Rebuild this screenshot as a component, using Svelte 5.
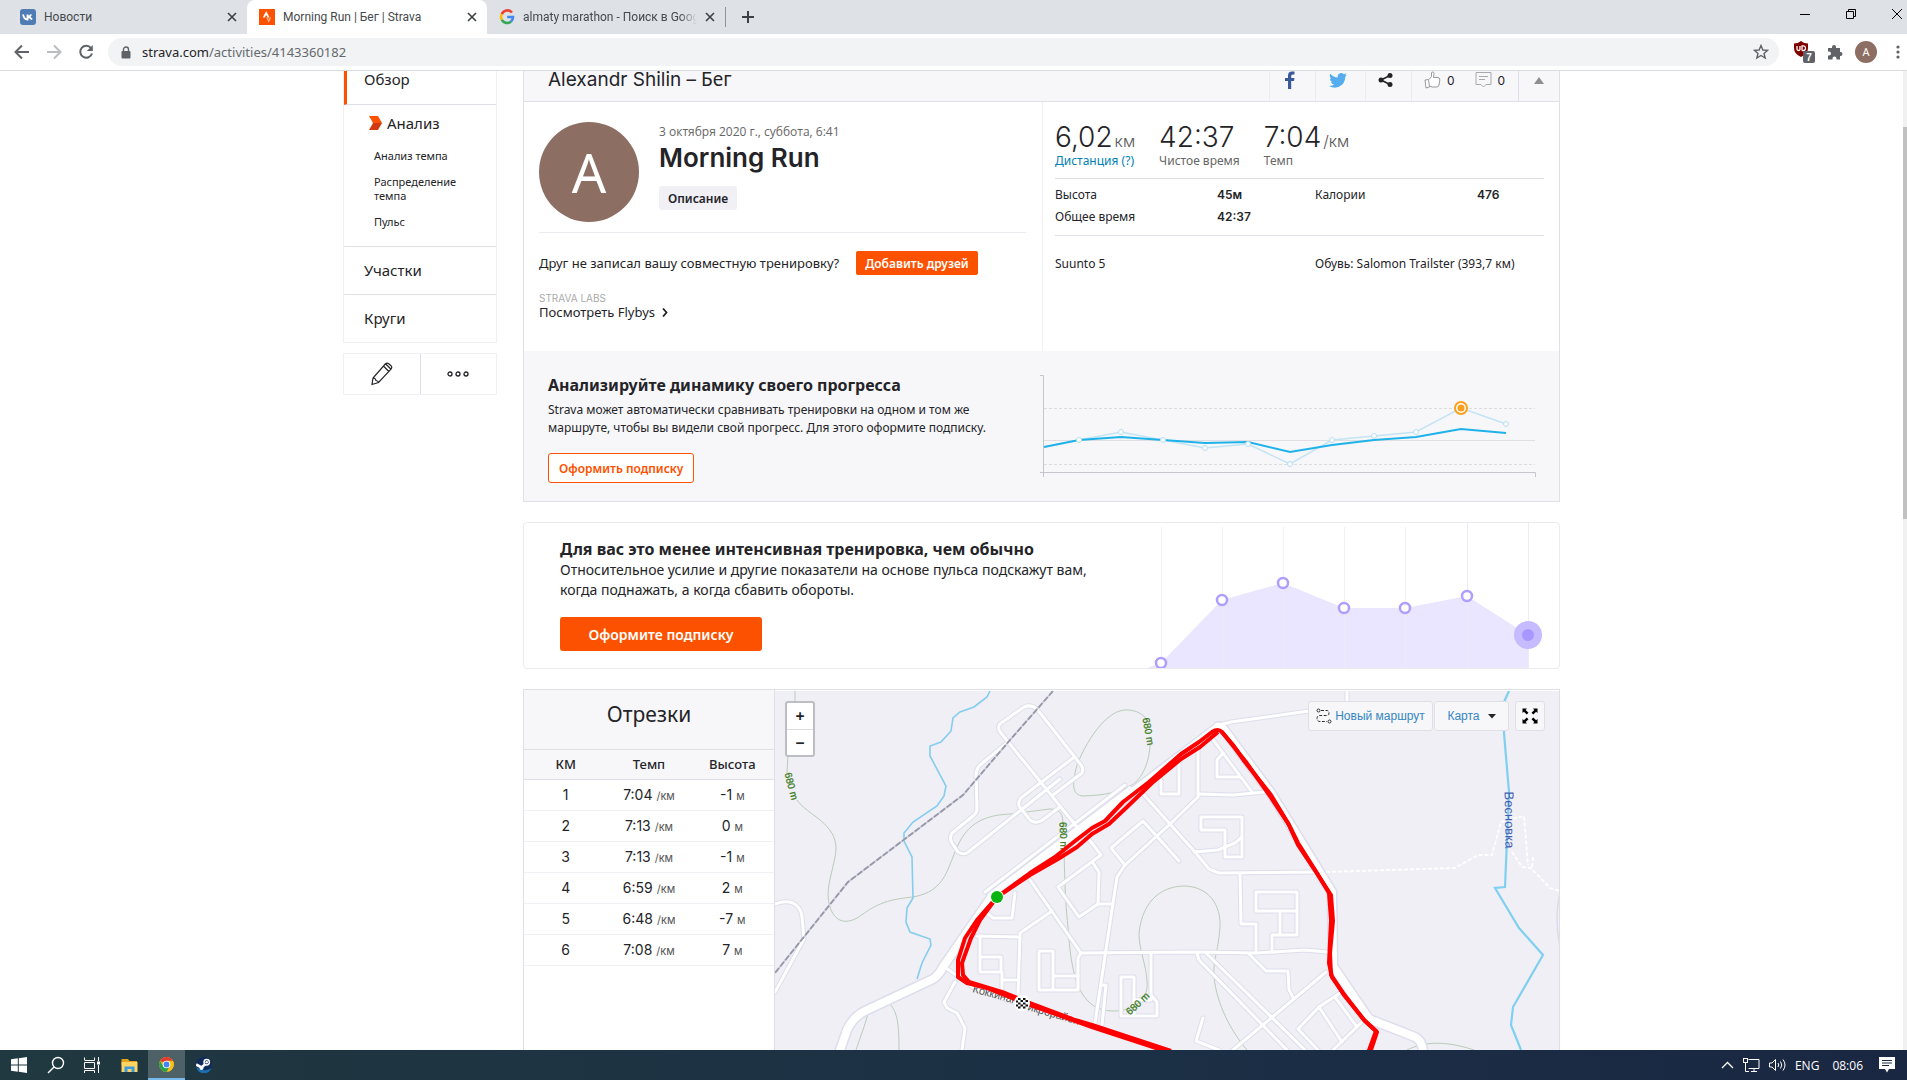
<script>
	const tabs = [
		{ titulo: 'Новости', icono: 'vk', activa: false },
		{ titulo: 'Morning Run | Бег | Strava', icono: 'strava', activa: true },
		{ titulo: 'almaty marathon - Поиск в Google', icono: 'google', activa: false }
	];

	const splits = [
		{ km: 1, pace: '7:04', elev: '-1' },
		{ km: 2, pace: '7:13', elev: '0' },
		{ km: 3, pace: '7:13', elev: '-1' },
		{ km: 4, pace: '6:59', elev: '2' },
		{ km: 5, pace: '6:48', elev: '-7' },
		{ km: 6, pace: '7:08', elev: '7' }
	];

	// Progress chart
	const runs = [
		[39, 67], [81, 59], [123, 67], [165, 75], [208, 71], [250, 91],
		[292, 67], [334, 63], [376, 59], [421, 35], [466, 51]
	];
	const trend = '4,74 39,67 81,64 123,67 165,70 208,69 250,79 292,72 334,67 376,64 421,56 466,60';

	// Relative effort chart
	const effort = [[14, 140], [75, 77], [136, 60], [197, 85], [258, 85], [320, 73], [381, 112]];

	// Map geometry
	const roads = [
		'M278 104L307 82Q309 78 306 74L262 18Q256 13 249 16L226 32Q221 36 226 42L302 136',
		'M232 52L205 74Q201 78 201 84L202 118Q202 122 198 125L177 142Q174 147 177 152L183 161Q188 164 192 162L285 88',
		'M298 67L247 106Q243 109 244 115L255 129Q260 133 266 130L285 116',
		'M350 94L210 201', 'M355 97L215 203',
		'M444 34L456 31L534 20L572 12V0',
		'M369 104L420 161L434 178L444 182L541 181',
		'M423 56V106L394 134L350 174L342 186L338 212L320 332',
		'M350 174L336 157L368 130L404 170',
		'M386 89V103H404V72',
		'M436 46L477 101', 'M424 103L458 104L489 101',
		'M448 62L442 69V86H465',
		'M450 166V139H426V126H467V166Z', 'M419 161L443 159L460 152L467 146',
		'M465 183L466 233H481V261',
		'M481 220V201H522V244H497V261', 'M481 220H522', 'M505 220V244',
		'M306 262L420 261L481 262L530 259L552 261',
		'M255 189L306 262L303 267V299H264V260H278V299', 'M278 285H303',
		'M277 220L245 242L243 306',
		'M312 146L326 164L283 196L304 226L323 213H338', 'M318 172L324 181L323 213',
		'M376 262V309H359', 'M359 324V286H346V325H382V311L376 304',
		'M326 294H331L327 334',
		'M422 262L424 269L512 359', 'M431 262L530 359',
		'M551 281L458 359',
		'M474 263L491 280H513L514 299L518 306',
		'M565 302L544 316L523 338L543 359', 'M544 316L567 351', 'M560 306L582 336', 'M589 329L558 359',
		'M428 327L421 350L444 359',
		'M202 245L243 246', 'M205 245V281H226V266H205', 'M227 281V297', 'M227 289H242',
		'M212 222L218 227H237L240 202',
		'M171 277L202 299L247 314', 'M180 291L169 311L172 317L182 322L190 337L187 359',
		'M0 213Q10 209 18 212Q26 216 27 226L29 248L0 301'
	];
	const mainRoads = [
		'M443 36L317 132L217 205L168 276Q164 284 158 288L90 320Q78 326 72 339L64 362',
		'M441 36Q446 34 450 40L496 102L544 180L557 201L558 275L594 328L640 346Q648 350 648 362'
	];
	const contours = [
		'M20 0V14', 'M13 64L12 82',
		'M22 109C32 124 62 132 61 159C60 172 53 190 53 204C54 226 66 236 82 227C96 218 104 209 138 206C172 200 172 176 184 152C196 128 216 124 235 123L275 118C286 118 288 124 288 134C290 176 289 200 293 236C296 280 302 320 338 320C362 320 374 306 372 290C371 272 364 260 364 242C368 206 390 195 410 195C434 196 446 214 445 236C443 262 438 268 439 286C442 314 456 340 472 359',
		'M375 54C374 76 364 90 357 94C342 102 330 104 308 105C298 104 296 96 302 74C314 44 334 18 352 19C362 19 370 24 374 32',
		'M81 359C86 344 90 334 92 326C96 314 104 306 112 311C122 318 124 330 124 359',
		'M632 359C650 350 672 350 699 359'
	];

	const routeUp = 'M222 206L255 182L280 166L300 150L317 137L330 130L348 111L374 91L406 63L424 51L437 41Q443 37 447 41L458 54L470 71L496 104L513 132L523 152L542 182L554 202L556 229L554 272L557 286L568 302L589 329L601 340L593 362';
	const routeDown = 'M222 206L202 229L190 247L183 269V286L192 292L212 297L247 311L317 336L396 362';
	const routeLap = 'M443 41L425 56L406 68L377 92L352 116L334 133L317 143L302 156L283 168L255 184L222 206L205 229L196 247L187 272L188 284L194 291L230 302L255 312L300 329L317 334L396 360';
	const routeLapRight = 'M447 41L471 71L495 105L514 134L523 154L543 184L556 204L558 230L555 262L556 284L569 304L590 330L602 341L595 362';
</script>

<div class="screen">
	<header class="chrome">
		<div class="tab-strip">
			{#each tabs as tab}
				<div class="tab" class:active={tab.activa}>
					<svg class="favicon" viewBox="0 0 16 16" aria-hidden="true">
						{#if tab.icono === 'vk'}
							<rect width="16" height="16" rx="3" fill="#4f7db3" />
							<path d="M3 5.500C3.600 8.500 5 10.500 7.500 10.500V5.500M7.500 8C9.200 8 10.400 7 11.200 5.500M7.800 8C9.800 8 11 9 12 10.500" fill="none" stroke="#fff" stroke-width="1.800" />
						{:else if tab.icono === 'strava'}
							<rect width="16" height="16" fill="#fc5200" />
							<path d="M7.200 2L3.800 8.600H5.800L7.200 6L8.600 8.600H10.600Z" fill="#fff" />
							<path d="M8.600 8.600L9.700 10.800L10.600 8.600H12.200L9.700 13.800L7.200 8.600Z" fill="#fdb08c" />
						{:else}
							<path d="M13 3.500A6 6 0 0 0 2.800 5.200" fill="none" stroke="#ea4335" stroke-width="2.600" />
							<path d="M2.800 5.200A6 6 0 0 0 2.800 10.800" fill="none" stroke="#fbbc05" stroke-width="2.600" />
							<path d="M2.800 10.800A6 6 0 0 0 12 12.500" fill="none" stroke="#34a853" stroke-width="2.600" />
							<path d="M12 12.500A6 6 0 0 0 14 8H8.200" fill="none" stroke="#4285f4" stroke-width="2.600" />
						{/if}
					</svg>
					<span class="tab-title">{tab.titulo}</span>
					<button class="tab-close" aria-label="Закрыть">
						<svg width="10" height="10" viewBox="0 0 10 10"><path d="M1 1L9 9M9 1L1 9" stroke="#3c4043" stroke-width="1.600" /></svg>
					</button>
				</div>
			{/each}
			<button class="new-tab" aria-label="Новая вкладка">
				<svg width="14" height="14" viewBox="0 0 14 14"><path d="M7 1V13M1 7H13" stroke="#3c4043" stroke-width="2" /></svg>
			</button>
			<div class="window-buttons">
				<button aria-label="Свернуть"><svg width="12" height="12" viewBox="0 0 12 12"><path d="M1 6.500H11" stroke="#000" /></svg></button>
				<button aria-label="Окно"><svg width="12" height="12" viewBox="0 0 12 12"><path d="M1.500 3.500H8.500V10.500H1.500ZM3.500 3.500V1.500H10.500V8.500H8.500" fill="none" stroke="#000" /></svg></button>
				<button aria-label="Закрыть окно"><svg width="12" height="12" viewBox="0 0 12 12"><path d="M1 1L11 11M11 1L1 11" stroke="#000" /></svg></button>
			</div>
		</div>
		<div class="toolbar">
			<button class="nav" aria-label="Назад"><svg width="16" height="16" viewBox="0 0 16 16"><path d="M15 8H2M8 1.500L1.500 8L8 14.500" fill="none" stroke="#5f6368" stroke-width="2" /></svg></button>
			<button class="nav" aria-label="Вперёд"><svg width="16" height="16" viewBox="0 0 16 16"><path d="M1 8H14M8 1.500L14.500 8L8 14.500" fill="none" stroke="#bbbdc0" stroke-width="2" /></svg></button>
			<button class="nav" aria-label="Обновить"><svg width="16" height="16" viewBox="0 0 16 16"><path d="M13 4A6 6 0 1 0 14 9.500" fill="none" stroke="#5f6368" stroke-width="2" /><path d="M14.800 1V7H8.800Z" fill="#5f6368" /></svg></button>
			<div class="omnibox">
				<svg width="10" height="13" viewBox="0 0 10 13"><rect x="0.500" y="5" width="9" height="7.500" rx="1" fill="#5f6368" /><path d="M2.500 5V3.500A2.500 2.500 0 0 1 7.500 3.500V5" fill="none" stroke="#5f6368" stroke-width="1.400" /></svg>
				<span class="url">strava.com<span>/activities/4143360182</span></span>
				<svg width="16" height="16" viewBox="0 0 16 16"><path d="M8 1.500L9.900 6L14.600 6.300L11 9.400L12.200 14.100L8 11.500L3.800 14.100L5 9.400L1.400 6.300L6.100 6Z" fill="none" stroke="#5f6368" stroke-width="1.400" /></svg>
			</div>
			<div class="extensions">
				<svg width="22" height="24" viewBox="0 0 22 24"><path d="M8 1Q11 3.500 15 3.500V8Q15 14 8 17Q1 14 1 8V3.500Q5 3.500 8 1Z" fill="#800000" /><path d="M4 6V9Q4 10.500 5.500 10.500T7 9V6M9 10.500V6Q12.500 5.500 12.500 8.200T9 10.500" fill="none" stroke="#fff" stroke-width="1.300" /><rect x="10" y="11" width="12" height="12" rx="2" fill="#5f6368" /><text x="16" y="21" text-anchor="middle" class="badge">7</text></svg>
				<svg width="16" height="16" viewBox="0 0 16 16"><path d="M1 4H5V3A2 2 0 0 1 9 3V4H13V8H13.500A2 2 0 0 1 13.500 12H13V15.500H9.500V14.500A2 2 0 0 0 5.500 14.500V15.500H1V11.500H2A2 2 0 0 0 2 7.500H1Z" fill="#5f6368" /></svg>
				<span class="profile">A</span>
				<svg class="dots" width="4" height="16" viewBox="0 0 4 16" fill="#5f6368"><circle cx="2" cy="3" r="1.600" /><circle cx="2" cy="8" r="1.600" /><circle cx="2" cy="13" r="1.600" /></svg>
			</div>
		</div>
	</header>

	<div class="viewport">
		<div class="page">
			<nav class="sidebar">
				<ul class="menu">
					<li class="selected"><a href="#overview">Обзор</a></li>
					<li class="analysis">
						<a class="premium" href="#analysis">
							<svg width="13" height="14" viewBox="0 0 13 14"><path d="M0 0H9L13 7H4Z" fill="#fc5200" /><path d="M4 7H13L9 14H0Z" fill="#cf3a12" /></svg>
							Анализ
						</a>
						<a class="sub" href="#pace">Анализ темпа</a>
						<a class="sub" href="#zones">Распределение темпа</a>
						<a class="sub" href="#hr">Пульс</a>
					</li>
					<li><a href="#segments">Участки</a></li>
					<li><a href="#laps">Круги</a></li>
				</ul>
				<div class="tools">
					<button aria-label="Редактировать"><svg width="22" height="24" viewBox="0 0 22 24"><path d="M1 22.500L2 16L14.500 1.800Q16 0.500 18 2L20 3.700Q21.500 5.200 20 7.200L7.500 20.500ZM12.500 4L17.800 9.500M14.500 1.800L20 7.200M2 16Q4.500 16 5 18.500Q7.500 19 7.500 20.500" fill="none" stroke="#242428" stroke-width="1.200" /></svg></button>
					<button aria-label="Ещё"><svg width="22" height="6" viewBox="0 0 22 6" fill="none" stroke="#242428" stroke-width="1.300"><circle cx="3" cy="3" r="2" /><circle cx="11" cy="3" r="2" /><circle cx="19" cy="3" r="2" /></svg></button>
				</div>
			</nav>

			<main>
				<section class="activity">
					<div class="heading">
						<h2><span class="latin">Alexandr Shilin –</span> Бег</h2>
						<button class="share fb" aria-label="Facebook"><svg width="10" height="18" viewBox="0 0 10 18"><path d="M3 18V10H0V7H3V4.500Q3 0.500 7 0.500H9.500V3.500H7.800Q6.200 3.500 6.200 5V7H9.500L9 10H6.200V18Z" fill="#3b5998" /></svg></button>
						<button class="share tw" aria-label="Twitter"><svg width="18" height="15" viewBox="0 0 18 15"><path d="M0 13Q3.200 13.200 5.200 11.600Q2.600 11.300 1.900 9Q2.800 9.200 3.500 8.900Q0.800 8 0.700 5.200Q1.500 5.700 2.300 5.700Q-0.100 3.700 1.200 0.800Q4.300 4.400 8.800 4.600Q8.100 1.600 10.400 0.400Q12.900-0.700 14.800 1.200Q16.200 0.900 17.400 0.300Q16.900 1.700 15.900 2.400Q17 2.300 18 1.800Q17.400 2.900 16.200 3.900Q16.200 8.500 13 11.800Q7 17 0 13Z" fill="#55acee" /></svg></button>
						<button class="share sh" aria-label="Поделиться"><svg width="15" height="14" viewBox="0 0 15 14"><path d="M12 2.500L3 7L12 11.500" fill="none" stroke="#242428" stroke-width="1.600" /><circle cx="12" cy="2.600" r="2.500" fill="#242428" /><circle cx="3" cy="7" r="2.500" fill="#242428" /><circle cx="12" cy="11.400" r="2.500" fill="#242428" /></svg></button>
						<div class="social">
							<button aria-label="Kudos"><svg width="17" height="18" viewBox="0 0 17 18"><path d="M5 8.500L7.500 5.500V2Q7.500 1 8.800 1T10 2.500L9.500 6.500H14Q16 6.500 15.800 9L15 14Q14.600 16 12.500 16H8L5.500 15M1 9L4.500 8.500L5.500 16L2 17Z" fill="#fff" stroke="#98989e" /></svg>0</button>
							<button aria-label="Комментарии"><svg width="17" height="16" viewBox="0 0 17 16"><path d="M1 0.500H16V12.500H11L8.500 15L6 12.500H1ZM4 4.500H13M4 7.500H10" fill="none" stroke="#a8a8ae" /></svg>0</button>
						</div>
						<button class="collapse" aria-label="Свернуть"><svg width="10" height="7" viewBox="0 0 10 7"><path d="M5 0L10 7H0Z" fill="#8e8e93" /></svg></button>
					</div>

					<div class="columns">
						<div class="details">
							<div class="summary">
								<div class="avatar">A</div>
								<div class="title">
									<time>3 октября 2020 г., суббота, 6:41</time>
									<h1>Morning Run</h1>
									<button class="describe">Описание</button>
								</div>
							</div>
							<div class="friends">
								<span>Друг не записал вашу совместную тренировку?</span>
								<button>Добавить друзей</button>
							</div>
							<div class="labs">
								<small>STRAVA LABS</small>
								<a href="#flybys">
									Посмотреть Flybys
									<svg width="6" height="9" viewBox="0 0 6 9"><path d="M1 0.500L4.500 4.500L1 8.500" fill="none" stroke="#242428" stroke-width="1.800" /></svg>
								</a>
							</div>
						</div>

						<div class="stats">
							<ul class="big">
								<li><strong>6,02<small>км</small></strong><a href="#distance">Дистанция (?)</a></li>
								<li><strong>42:37</strong><span>Чистое время</span></li>
								<li><strong>7:04<small>/км</small></strong><span>Темп</span></li>
							</ul>
							<div class="more">
								<span>Высота</span><b>45м</b><span>Калории</span><b>476</b>
								<span>Общее время</span><b>42:37</b>
							</div>
							<div class="gear">
								<span>Suunto 5</span>
								<span>Обувь: Salomon Trailster (393,7 км)</span>
							</div>
						</div>
					</div>

					<div class="upsell">
						<div class="upsell-text">
							<h3>Анализируйте динамику своего прогресса</h3>
							<p>Strava может автоматически сравнивать тренировки на одном и том же маршруте, чтобы вы видели свой прогресс. Для этого оформите подписку.</p>
							<button>Оформить подписку</button>
						</div>
						<svg class="progress" viewBox="0 0 500 106">
							<path d="M0 2.500H3.500V104M0 99.500H495.500V104" fill="none" stroke="#c5c5cb" />
							<path d="M4 35.500H495M4 91.500H495" stroke="#dcdce0" stroke-dasharray="3 2" />
							<path d="M4 67.500H495" stroke="#dfdfe3" />
							<polyline points={'4,74 ' + runs.map((p) => p.join(',')).join(' ')} fill="none" stroke="#c3e4f3" stroke-width="1.500" />
							<polyline points={trend} fill="none" stroke="#1fb2e9" stroke-width="2" />
							{#each runs as [x, y], i}
								{#if i === 9}
									<circle cx={x} cy={y} r="6" fill="#fff" stroke="#fc9f1c" stroke-width="2" />
									<circle cx={x} cy={y} r="3.500" fill="#fc9f1c" />
								{:else}
									<circle cx={x} cy={y} r="2.500" fill="#fff" stroke="#b5dff1" />
								{/if}
							{/each}
						</svg>
					</div>
				</section>

				<section class="effort">
					<div class="effort-text">
						<h3>Для вас это менее интенсивная тренировка, чем обычно</h3>
						<p>Относительное усилие и другие показатели на основе пульса подскажут вам, когда поднажать, а когда сбавить обороты.</p>
						<button>Оформите подписку</button>
					</div>
					<svg viewBox="0 0 412 145">
						<polygon points={'0,145 ' + effort.map((p) => p.join(',')).join(' ') + ' 381,145'} fill="#eae6ff" />
						{#each effort as [x, y], i}
							<path d="M{x}.5 {i > 4 ? 0 : 4}V145" stroke="#ececf2" stroke-width={i > 4 ? 1 : 0.7} />
						{/each}
						{#each effort as [x, y], i}
							{#if i === 6}
								<circle cx={x} cy={y} r="14" fill="#c6bbff" />
								<circle cx={x} cy={y} r="6" fill="#a897ff" />
							{:else}
								<circle cx={x} cy={y} r="5" fill="#fff" stroke="#ad9eff" stroke-width="2.500" />
							{/if}
						{/each}
					</svg>
				</section>

				<section class="route">
					<div class="splits">
						<h2>Отрезки</h2>
						<table>
							<thead>
								<tr><th>КМ</th><th>Темп</th><th>Высота</th></tr>
							</thead>
							<tbody>
								{#each splits as s (s.km)}
									<tr>
										<td>{s.km}</td>
										<td>{s.pace} <small>/км</small></td>
										<td>{s.elev} <small>м</small></td>
									</tr>
								{/each}
							</tbody>
						</table>
					</div>

					<div class="map">
						<svg class="tiles" viewBox="0 0 785 359" preserveAspectRatio="xMinYMin slice">
							<g fill="none" stroke="#b9ccb8">
								{#each contours as d}<path {d} />{/each}
							</g>
							<path d="M215 0L212 6L199 16L185 21L178 27L176 40L166 51L155 55V65L171 95L169 105L162 115L138 131L129 142V150L137 166L138 207L132 217L131 231L135 241L155 248L156 254L147 272L142 288" fill="none" stroke="#84cdee" stroke-width="1.600" />
							<path d="M734 0L729 11V42L734 101L730 196L720 197L744 237L768 264L738 316L736 334L746 359" fill="none" stroke="#7fd0f0" stroke-width="2.200" />
							<path d="M785 201Q779 227 785 256" fill="none" stroke="#dcdce8" stroke-width="1.500" />
							<g fill="none" stroke="#dddeec" stroke-width="5" stroke-linejoin="round" stroke-linecap="round">
								{#each roads as d}<path {d} />{/each}
							</g>
							<g fill="none" stroke="#dddeec" stroke-width="11" stroke-linejoin="round">
								{#each mainRoads as d}<path {d} />{/each}
							</g>
							<g fill="none" stroke="#fff" stroke-width="3" stroke-linejoin="round" stroke-linecap="round">
								{#each roads as d}<path {d} />{/each}
							</g>
							<g fill="none" stroke="#fff" stroke-width="8" stroke-linejoin="round">
								{#each mainRoads as d}<path {d} />{/each}
							</g>
							<path d="M551 181L680 177L703 164H717L726 131L749 125L753 174M737 161L747 176L756 177L775 197L785 200M758 166L757 177" fill="none" stroke="#fff" stroke-width="1.800" stroke-dasharray="4 2" />
							<path d="M278 0L235 49L188 104L73 191L0 282" fill="none" stroke="#cfcfdc" stroke-width="1.800" />
							<path d="M278 0L235 49L188 104L73 191L0 282" fill="none" stroke="#9697a8" stroke-width="1.800" stroke-dasharray="6 2" />
							<g class="contour-label">
								<text transform="translate(13 96) rotate(75)">680 m</text>
								<text transform="translate(370 41) rotate(80)">680 m</text>
								<text transform="translate(285 145) rotate(88)">680 m</text>
								<text transform="translate(365 315) rotate(-43)">680 m</text>
							</g>
							<text class="river-label" transform="translate(730 129) rotate(89)">Весновка</text>
							<text class="street-label" transform="translate(197 301) rotate(15)">Коккинаки</text>
							<text class="street-label" transform="translate(252 319) rotate(16)">икрорайон</text>
							<g fill="none" stroke="#f00" stroke-width="4" stroke-linejoin="round">
								<path d={routeUp} />
								<path d={routeDown} />
								<path d={routeLap} />
								<path d={routeLapRight} />
							</g>
							<circle cx="222" cy="206" r="7" fill="#fff" />
							<circle cx="222" cy="206" r="6" fill="#0ab410" />
							<circle cx="247" cy="312" r="8" fill="#fff" />
							<path d="M243 307h2.500v2h-2.500zM248 307h2.500v2h-2.500zM245.500 309h2.500v2h-2.500zM250.500 309h2.500v2h-2.500zM241 309.500h2v2h-2zM243 311.500h2.500v2h-2.500zM248 311.500h2.500v2h-2.500zM245.500 313.500h2.500v2h-2.500zM250.500 313.500h2.500v2h-2.500zM241 313.500h2v2h-2zM243 315.500h2.500v2h-2.500zM248 315.500h2.500v2h-2.500z" fill="#111" />
						</svg>
						<div class="zoom">
							<button>+</button>
							<button>−</button>
						</div>
						<div class="map-buttons">
							<button class="new-route">
								<svg width="16" height="16" viewBox="0 0 16 16" fill="none" stroke="#333"><circle cx="2.500" cy="2.500" r="1.500" /><circle cx="13.500" cy="13.500" r="1.500" /><path d="M5 2.500H11Q13 2.500 13 5T11 7.500H4Q1 7.500 1 10.500T4 13.500H11" stroke-dasharray="3 1.500" /></svg>
								Новый маршрут
							</button>
							<button class="map-type">Карта <svg width="8" height="5" viewBox="0 0 8 5"><path d="M0 0H8L4 4.500Z" fill="#242428" /></svg></button>
							<button class="fullscreen" aria-label="На весь экран"><svg width="16" height="16" viewBox="0 0 16 16"><path d="M0.500 0.500H5L3.700 1.900L6.500 4.700L4.700 6.500L1.900 3.700L0.500 5ZM15.500 0.500V5L14.100 3.700L11.300 6.500L9.500 4.700L12.300 1.900L11 0.500ZM0.500 15.500V11L1.900 12.300L4.700 9.500L6.500 11.300L3.700 14.100L5 15.500ZM15.500 15.500H11L12.300 14.100L9.500 11.300L11.300 9.500L14.100 12.300L15.500 11Z" fill="#000" /></svg></button>
						</div>
					</div>
				</section>
			</main>
		</div>
		<div class="scrollbar"><div class="thumb"></div></div>
	</div>

	<footer class="taskbar">
		<button aria-label="Пуск"><svg width="16" height="16" viewBox="0 0 16 16"><path d="M0 2.300L6.800 1.300V7.500H0ZM7.800 1.200L16 0V7.500H7.800ZM0 8.500H6.800V14.700L0 13.700ZM7.800 8.500H16V16L7.800 14.800Z" fill="#fff" /></svg></button>
		<button aria-label="Поиск"><svg width="18" height="18" viewBox="0 0 18 18" fill="none" stroke="#fff" stroke-width="1.400"><circle cx="11" cy="7" r="5.500" /><path d="M7 11L1 17" /></svg></button>
		<button aria-label="Представление задач"><svg width="17" height="16" viewBox="0 0 17 16" fill="none" stroke="#fff"><path d="M0.500 0.500V3M0.500 3.500H10.500V0.500M0.500 5.500H10.500V11.500H0.500ZM0.500 16V13.500H10.500V16M14.500 0V4M14.500 8V16" /><rect x="13" y="4.500" width="3" height="3" fill="#fff" stroke="none" /></svg></button>
		<button aria-label="Проводник"><svg width="17" height="15" viewBox="0 0 17 15"><path d="M0.500 1H7L8.500 3H16V7H0.500Z" fill="#e2a31b" /><rect x="0.500" y="4" width="16" height="10" fill="#fcd462" /><path d="M3.500 14V8.500H13.500V14H10.500V11H6.500V14Z" fill="#3c9ade" /></svg></button>
		<button class="running" aria-label="Chrome"><svg width="15" height="15" viewBox="0 0 16 16"><circle cx="8" cy="8" r="8" fill="#fbc116" /><path d="M8 8L1.100 4A8 8 0 0 1 14.900 4H8Z" fill="#e33b2e" /><path d="M1.100 4A8 8 0 0 0 8 16L11.400 10L8 12L4.600 10Z" fill="#2aa14c" /><circle cx="8" cy="8" r="4" fill="#fff" /><circle cx="8" cy="8" r="3.100" fill="#4285f4" /></svg></button>
		<button aria-label="Steam"><svg width="16" height="16" viewBox="0 0 16 16"><circle cx="8" cy="8" r="8" fill="#0f2a5c" /><path d="M0.200 10A8 8 0 0 0 15.500 11Q8 16 0.200 10Z" fill="#1a6fb0" /><path d="M0.200 7.500L5.500 10.500L9.500 7" fill="none" stroke="#fff" stroke-width="2.600" /><circle cx="10.700" cy="5.300" r="2.700" fill="#0f2a5c" stroke="#fff" stroke-width="1.500" /><circle cx="10.700" cy="5.300" r="1.300" fill="#fff" /><circle cx="5.500" cy="11" r="2" fill="#fff" /></svg></button>
		<div class="tray">
			<svg width="13" height="8" viewBox="0 0 13 8"><path d="M1 7L6.500 1.500L12 7" fill="none" stroke="#fff" stroke-width="1.300" /></svg>
			<svg width="17" height="14" viewBox="0 0 17 14" fill="none" stroke="#fff"><path d="M5.500 1.500H16V10.500H5.500M8 13.500H14M11 10.500V13.500M2.500 5V13.500H6" /><rect x="0.500" y="0.500" width="4" height="4" /></svg>
			<svg width="17" height="14" viewBox="0 0 17 14" fill="none" stroke="#fff"><path d="M0.500 5H3L6.500 1.500V12.500L3 9H0.500ZM9 5Q10.500 7 9 9M11.500 3.500Q14 7 11.500 10.500M14 1.500Q18 7 14 12.500" /></svg>
			<span>ENG</span>
			<span class="clock">08:06</span>
			<svg width="16" height="16" viewBox="0 0 16 16"><path d="M0 0H16V12H10L8 15.500L6 12H0Z" fill="#fff" /><path d="M3 3.500H13M3 6H13M3 8.500H10" stroke="#1a2744" /></svg>
		</div>
	</footer>
</div>

<style>
	:global(body) {
		margin: 0;
		overflow: hidden;
	}

	* {
		box-sizing: border-box;
	}

	.screen {
		display: flex;
		flex-direction: column;
		height: 100vh;
		font-family: 'Noto Sans', sans-serif;
		color: #242428;
		background: #fff;
	}

	button {
		display: flex;
		align-items: center;
		justify-content: center;
		padding: 0;
		border: none;
		background: none;
		font-family: inherit;
		color: inherit;
		cursor: pointer;
	}

	a {
		color: inherit;
		text-decoration: none;
	}

	ul {
		margin: 0;
		padding: 0;
		list-style: none;
	}

	svg {
		flex-shrink: 0;
	}

	h1, h2, h3, p {
		margin: 0;
	}

	/* Browser */
	.tab-strip {
		display: flex;
		align-items: center;
		height: 34px;
		background: #dee1e6;
	}

	.tab {
		display: flex;
		align-items: center;
		gap: 8px;
		width: 240px;
		height: 34px;
		padding: 0 10px 0 12px;
		font-family: Roboto, sans-serif;
		font-size: 12px;
		color: #45494d;
	}

	.tab:first-child {
		width: 247px;
		padding-left: 20px;
	}

	.tab:nth-child(3) {
		width: 239px;
		border-right: 1px solid #909398;
		height: 20px;
	}

	.tab.active {
		background: #fff;
		border-radius: 8px 8px 0 0;
	}

	.favicon {
		width: 16px;
		height: 16px;
	}

	.tab-title {
		flex: 1;
		overflow: hidden;
		white-space: nowrap;
	}

	.tab:nth-child(3) .tab-title {
		mask-image: linear-gradient(to right, #000 90%, transparent);
	}

	.new-tab {
		width: 44px;
	}

	.window-buttons {
		display: flex;
		gap: 34px;
		margin-left: auto;
		padding-right: 4px;
		align-self: flex-start;
		padding-top: 8px;
	}

	.toolbar {
		display: flex;
		align-items: center;
		height: 37px;
		padding: 0 7px 0 6px;
		border-bottom: 1px solid #dadce0;
	}

	.nav {
		width: 32px;
	}

	.omnibox {
		display: flex;
		flex: 1;
		align-items: center;
		gap: 11px;
		height: 28px;
		margin-left: 6px;
		padding: 0 10px 0 13px;
		border-radius: 14px;
		background: #f1f3f4;
		font-size: 14px;
	}

	.url {
		flex: 1;
		font-size: 13px;
	}

	.url span {
		color: #65696e;
	}

	.extensions {
		display: flex;
		align-items: center;
		gap: 12px;
		padding-left: 14px;
	}

	.badge {
		font: bold 10px 'Liberation Sans', sans-serif;
		fill: #fff;
	}

	.profile {
		width: 22px;
		height: 22px;
		border-radius: 50%;
		background: #8d6e63;
		color: #fff;
		font-size: 11px;
		line-height: 22px;
		text-align: center;
	}

	.dots {
		margin-left: 7px;
	}

	/* Page */
	.viewport {
		display: flex;
		flex: 1;
		min-height: 0;
		overflow: hidden;
	}

	.page {
		display: flex;
		align-items: flex-start;
		gap: 26px;
		flex: 1;
		max-width: 1217px;
		margin: 0 auto;
	}

	.scrollbar {
		width: 4px;
		padding-top: 56px;
		background: #f1f1f1;
	}

	.thumb {
		height: 392px;
		background: #c1c1c1;
	}

	.sidebar {
		width: 154px;
		flex-shrink: 0;
	}

	.menu {
		border: 1px solid #f0f0f5;
		border-top: none;
		font-size: 15px;
	}

	.menu li {
		border-bottom: 1px solid #dfdfe8;
	}

	.menu li:last-child {
		border-bottom: none;
	}

	.menu a {
		display: block;
		padding-left: 20px;
		line-height: 47px;
	}

	.menu .selected {
		border-left: 3px solid #fc5200;
	}

	.menu .selected a {
		padding: 0 0 16px 17px;
		line-height: 17px;
	}

	.menu .analysis {
		padding: 8px 0 11px;
	}

	.menu .premium {
		display: flex;
		align-items: center;
		gap: 5px;
		padding-left: 25px;
		line-height: 20px;
		margin-bottom: 10px;
	}

	.menu .sub {
		padding: 6px 30px 6px 30px;
		font-size: 11px;
		line-height: 14px;
	}

	.tools {
		display: flex;
		height: 42px;
		margin-top: 10px;
		border: 1px solid #f0f0f5;
	}

	.tools button {
		flex: 1;
	}

	.tools button + button {
		border-left: 1px solid #dfdfe8;
	}

	main {
		flex: 1;
		min-width: 0;
	}

	.activity {
		border: 1px solid #dfdfe8;
		border-top: none;
	}

	.heading {
		display: flex;
		height: 31px;
		background: #f7f7fa;
		border-bottom: 1px solid #dfdfe8;
	}

	.heading h2 {
		flex: 1;
		padding-left: 24px;
		font-size: 19px;
		font-weight: 400;
		line-height: 16px;
	}

	.latin {
		font-family: Inter, sans-serif;
	}

	.heading button {
		align-items: center;
		height: 18px;
	}

	.heading .share, .heading .collapse {
		height: 30px;
		padding-bottom: 12px;
		border-left: 1px solid #ebebf0;
	}

	.heading .share {
		padding-right: 6px;
	}

	.heading .fb, .heading .sh {
		width: 46px;
	}

	.heading .tw {
		width: 50px;
	}

	.heading .collapse {
		width: 41px;
		border-left-color: #dfdfe8;
	}

	.social {
		display: flex;
		width: 107px;
		gap: 20px;
		padding-left: 12px;
		border-left: 1px solid #ebebf0;
	}

	.social button {
		gap: 6px;
		font: 12px Inter, sans-serif;
	}

	.columns {
		display: flex;
		height: 249px;
	}

	.details {
		width: 519px;
		padding: 20px 16px 0 15px;
		border-right: 1px solid #f0f0f5;
	}

	.summary {
		display: flex;
		gap: 20px;
		padding-bottom: 10px;
		border-bottom: 1px solid #ebebf0;
	}

	.avatar {
		width: 100px;
		height: 100px;
		border-radius: 50%;
		background: #8d6e63;
		color: #fff;
		font-size: 54px;
		line-height: 100px;
		text-align: center;
	}

	.title time {
		display: block;
		font-family: 'Open Sans', sans-serif;
		font-size: 12px;
		line-height: 20px;
		color: #666;
	}

	.title h1 {
		margin-bottom: 12px;
		font: 600 26px/32px Inter, sans-serif;
	}

	.describe {
		height: 24px;
		padding: 0 9px;
		border-radius: 3px;
		background: #f0f0f5;
		font-size: 12px;
		font-weight: 600;
	}

	.friends {
		display: flex;
		align-items: center;
		gap: 17px;
		margin-top: 18px;
		font-size: 13px;
		white-space: nowrap;
	}

	.friends button {
		height: 24px;
		padding: 0 9px;
		border-radius: 2px;
		background: #fc5200;
		color: #fff;
		font-size: 12px;
		font-weight: 600;
	}

	.labs {
		display: flex;
		flex-direction: column;
		margin-top: 17px;
		font-size: 13px;
		line-height: 14px;
	}

	.labs small {
		font: 10px/13px Inter, sans-serif;
		color: #aaa;
	}

	.labs a svg {
		margin-left: 4px;
	}

	.stats {
		flex: 1;
		padding: 17px 15px 0 12px;
		font-size: 12px;
	}

	.big {
		display: flex;
		gap: 24px;
		padding-bottom: 9px;
		border-bottom: 1px solid #dfdfe8;
		line-height: 16px;
		color: #666;
	}

	.big strong {
		display: block;
		height: 34px;
		font: 300 28px/36px Inter, sans-serif;
		color: #242428;
	}

	.big strong small {
		margin-left: 2px;
		font-size: 16px;
		color: #555;
	}

	.big a {
		color: #007fb6;
	}

	.more, .gear {
		display: grid;
		grid-template-columns: 162px 98px 162px 1fr;
		line-height: 22px;
		font-size: 12px;
	}

	.more {
		padding: 5px 0 7px;
		border-bottom: 1px solid #dfdfe8;
	}

	.more b {
		font-family: Inter, sans-serif;
		font-weight: 600;
	}

	.gear {
		grid-template-columns: 260px 1fr;
		padding-top: 17px;
	}

	.upsell {
		display: flex;
		height: 150px;
		background: #f7f7fa;
	}

	.upsell-text {
		width: 516px;
		padding: 22px 0 0 24px;
	}

	.upsell h3, .effort h3 {
		font-size: 16px;
		font-weight: 700;
		line-height: 24px;
		white-space: nowrap;
	}

	.upsell p {
		width: 470px;
		margin: 4px 0 16px;
		font-size: 12px;
		line-height: 18px;
	}

	.upsell button {
		height: 30px;
		padding: 0 10px;
		border: 1px solid #fc5200;
		border-radius: 3px;
		background: #fff;
		color: #fc5200;
		font-size: 12px;
		font-weight: 600;
	}

	.progress {
		width: 500px;
		height: 106px;
		margin-top: 22px;
	}

	.effort {
		display: flex;
		justify-content: space-between;
		height: 147px;
		margin-top: 20px;
		border: 1px solid #ebebf0;
		border-radius: 4px;
	}

	.effort-text {
		width: 600px;
		padding: 15px 0 0 36px;
	}

	.effort h3 {
		line-height: 22px;
	}

	.effort p {
		width: 550px;
		margin-bottom: 17px;
		font-size: 14px;
		line-height: 20px;
	}

	.effort button {
		width: 202px;
		height: 34px;
		border-radius: 3px;
		background: #fc5200;
		color: #fff;
		font-size: 14px;
		font-weight: 600;
	}

	.effort svg {
		width: 412px;
		height: 145px;
	}

	.route {
		display: flex;
		height: 480px;
		margin-top: 20px;
		border: 1px solid #dfdfe8;
	}

	.splits {
		width: 251px;
		flex-shrink: 0;
		border-right: 1px solid #dfdfe8;
	}

	.splits h2 {
		height: 60px;
		background: #f7f7fa;
		border-bottom: 1px solid #dfdfe8;
		font-size: 21px;
		font-weight: 400;
		line-height: 48px;
		text-align: center;
	}

	.splits table {
		width: 100%;
		border-collapse: collapse;
		table-layout: fixed;
		font-size: 14px;
		text-align: center;
	}

	.splits th {
		height: 29px;
		padding: 0;
		background: #f7f7fa;
		border-bottom: 1px solid #dfdfe8;
		font-size: 13px;
		font-weight: 500;
	}

	.splits td {
		height: 31px;
		padding: 0;
		border-bottom: 1px solid #f0f0f5;
		font-family: Inter, sans-serif;
	}

	.splits small {
		font-size: 11px;
		color: #555;
	}

	.map {
		position: relative;
		flex: 1;
		margin-top: 1px;
		background: #f0eff5;
	}

	.tiles {
		display: block;
		width: 100%;
		height: 359px;
	}

	.contour-label {
		font: 10px 'Liberation Sans', sans-serif;
		fill: #3c7d1f;
		stroke: #3c7d1f;
		stroke-width: 0.3px;
		text-anchor: middle;
	}

	.river-label {
		font: 13px 'Liberation Sans', sans-serif;
		fill: #4560b0;
		text-anchor: middle;
	}

	.street-label {
		font: 11px 'Liberation Sans', sans-serif;
		fill: #555;
	}

	.zoom {
		position: absolute;
		top: 10px;
		left: 10px;
		width: 30px;
		border: 2px solid #bdbdc4;
		border-radius: 3px;
		background: #fff;
	}

	.zoom button {
		width: 26px;
		height: 26px;
		font-size: 16px;
		font-weight: 700;
	}

	.zoom button + button {
		border-top: 1px solid #ddd;
	}

	.map-buttons {
		position: absolute;
		top: 10px;
		right: 14px;
		display: flex;
		gap: 1px;
	}

	.map-buttons button {
		height: 30px;
		border: 1px solid #dfdfe8;
		border-radius: 3px;
		background: #f7f7fa;
		color: #3586c2;
		font: 12px 'Liberation Sans', sans-serif;
	}

	.new-route {
		width: 125px;
		gap: 3px;
	}

	.map-type {
		width: 75px;
		gap: 8px;
	}

	.map-buttons .fullscreen {
		width: 30px;
		margin-left: 5px;
	}

	/* Windows */
	.taskbar {
		display: flex;
		height: 30px;
		background: linear-gradient(to right, #20383f, #1b2f45 60%, #1a2742);
		color: #fff;
	}

	.taskbar > button {
		width: 37px;
	}

	.taskbar .running {
		border-bottom: 2px solid #76b9ed;
		background: #4d6167;
	}

	.tray {
		display: flex;
		align-items: center;
		gap: 9px;
		margin-left: auto;
		padding-right: 12px;
		font-family: 'Open Sans', sans-serif;
		font-size: 12px;
	}

	.clock {
		margin: 0 7px 0 4px;
	}
</style>
